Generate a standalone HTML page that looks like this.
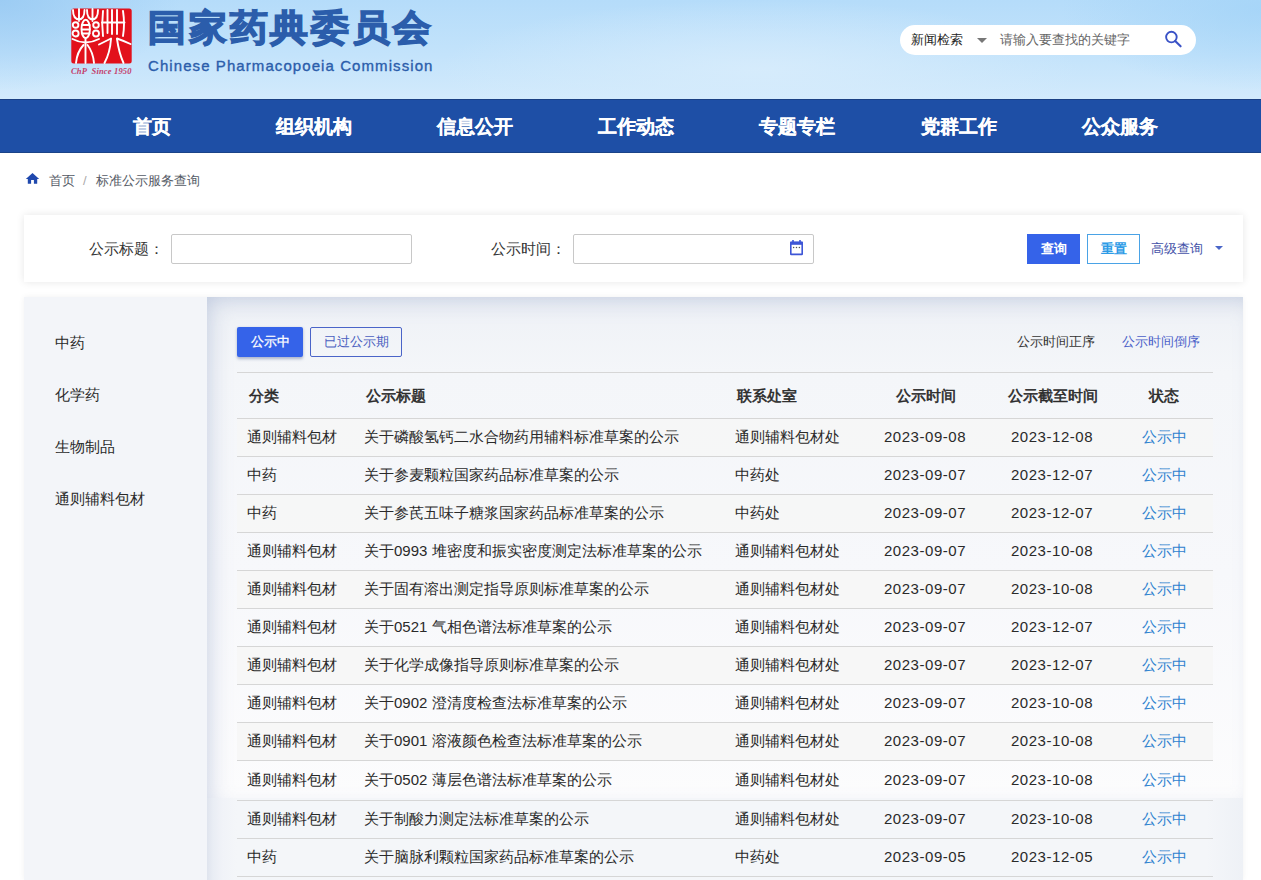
<!DOCTYPE html>
<html><head><meta charset="utf-8">
<style>
*{margin:0;padding:0;box-sizing:border-box}
html,body{width:1261px;height:880px;overflow:hidden;background:#fff;font-family:"Liberation Sans",sans-serif;color:#333}
#hdr{position:absolute;left:0;top:0;width:1261px;height:99px;background:radial-gradient(ellipse 180px 90px at 0px 0px,rgba(150,200,242,0.8),rgba(150,200,242,0)),radial-gradient(ellipse 200px 80px at 1261px 10px,rgba(160,210,247,0.7),rgba(160,210,247,0)),radial-gradient(ellipse 320px 70px at 760px 70px,rgba(215,236,252,0.9),rgba(215,236,252,0)),linear-gradient(180deg,#b5dcfa 0%,#c3e3fb 55%,#d2eafc 100%);overflow:hidden}
#nav{position:absolute;left:0;top:99px;width:1261px;height:54px;background:#1e4fa6;border-top:1px solid #1a4084;border-bottom:1px solid #1a4388}
#nav span{position:absolute;top:0px;height:54px;line-height:54px;width:161.3px;text-align:center;color:#fff;font-size:19px;font-weight:bold;-webkit-text-stroke:0.25px #fff}
.title{position:absolute;left:148px;top:8px;font-size:36px;line-height:40px;font-weight:bold;color:#2b5dab;white-space:nowrap;letter-spacing:2.85px;-webkit-text-stroke:1.5px #2b5dab;transform:scaleX(1.05);transform-origin:0 0}
.en{position:absolute;left:148px;top:57px;font-size:15px;line-height:17px;color:#2b5dab;white-space:nowrap;letter-spacing:1.08px;-webkit-text-stroke:0.35px #2b5dab}
.seal{position:absolute;left:71px;top:8px}
.since{position:absolute;left:71px;top:66px;font-family:"Liberation Serif",serif;font-style:italic;font-weight:bold;font-size:8.5px;line-height:10px;color:#c4406c;white-space:nowrap;letter-spacing:0.15px}
#search{position:absolute;left:900px;top:25px;width:296px;height:30px;border-radius:15px;background:#fff}
.s1{position:absolute;left:911px;top:32px;font-size:13px;line-height:16px;color:#222;white-space:nowrap}
.s2{position:absolute;left:1000px;top:32px;font-size:13px;line-height:16px;color:#666;white-space:nowrap}
.tri{position:absolute;width:0;height:0;border-left:5px solid transparent;border-right:5px solid transparent;border-top:5px solid #777}
.crumb{position:absolute;top:173px;font-size:13px;color:#555b66;white-space:nowrap;line-height:16px}
#qpanel{position:absolute;left:24px;top:215px;width:1219px;height:67px;background:#fff;box-shadow:0 0 8px rgba(0,0,0,0.10)}
.lbl{position:absolute;font-size:14px;color:#333;white-space:nowrap;line-height:18px}
.inp{position:absolute;height:30px;border:1px solid #c8c8c8;border-radius:2px;background:#fff}
.btn{position:absolute;height:30px;font-size:13px;text-align:center;white-space:nowrap}
#main{position:absolute;left:24px;top:297px;width:1219px;height:583px;background:#f3f5f9;box-shadow:0 0 6px rgba(0,0,0,0.06)}
#content{position:absolute;left:207px;top:297px;width:1036px;height:501px;background:linear-gradient(180deg,#eef1f6 0%,#f4f6f9 15%,#f7f8fb 55%,#fcfcfd 100%);box-shadow:inset 8px 8px 24px -8px rgba(120,140,185,0.42)}
#content2{position:absolute;left:207px;top:798px;width:1036px;height:82px;background:linear-gradient(90deg,#dfe4ee 0px,#e9edf4 6px,#f1f3f8 16px,#f4f6f9 30px,#f4f6f9 1000px,#eef1f6 1036px)}
.side{position:absolute;left:55px;font-size:15px;color:#2a2a2a;white-space:nowrap;line-height:20px}
.th{position:absolute;top:386px;font-size:14.8px;line-height:20px;font-weight:normal;-webkit-text-stroke:0.55px #2a2a2a;color:#2a2a2a;white-space:nowrap}
.hl{position:absolute;left:237px;width:976px;height:1px;background:#d6d6d6}
.row{position:absolute;left:237px;width:976px}
.row.stripe{background:rgba(246,246,246,0.9)}
.row span{position:absolute;top:0;font-size:15px;color:#2a2a2a;white-space:nowrap}
.num{letter-spacing:0.55px}
.c1{left:646px;width:84px;text-align:center}
.c2{left:773px;width:84px;text-align:center}
.st{left:897px;width:60px;text-align:center;color:#2f82cf !important}
</style></head><body>
<div id="hdr"></div>
<svg class="seal" width="61" height="56" viewBox="0 0 61 56">
<rect x="0.3" y="0.5" width="60.4" height="55" rx="2.5" fill="#e2111b"/>
<g fill="none" stroke="#fff" stroke-width="1.9" stroke-linecap="round">
<path d="M2 2 Q2 11 8 11.5 Q13.5 11 13.5 2 M8 1 V13"/>
<path d="M16 2 Q16 11 21.5 11.5 Q27 11 27 2 M21.5 1 V13"/>
<ellipse cx="14.7" cy="21" rx="4.2" ry="9.2"/>
<path d="M10.8 17 H18.6 M10.8 21.5 H18.6 M10.8 25.5 H18.6"/>
<circle cx="4.6" cy="17" r="2.8"/><circle cx="4.6" cy="25.5" r="3"/>
<circle cx="25" cy="17" r="2.8"/><circle cx="25" cy="25.5" r="3"/>
<path d="M1.5 31 Q14.5 38 28 31"/>
<path d="M14.5 30 V55"/>
<path d="M12.5 37 Q6 44 5 55 M16.5 37 Q22 44 23 55"/>
<path d="M32 3 Q30.5 16 32 28 M36.5 2 V25 M41 2 V26 M46 2 V26 M52 3 Q54 16 52 28"/>
<path d="M31 14.5 H53.5"/>
<path d="M28 36.5 Q35 33 40 30.5 M46 30.5 Q53 33 59.5 36"/>
<path d="M40 31 Q39 45 33.5 55 M46 31 Q48 45 52.5 55"/>
</g>
</svg>
<div class="since">ChP&nbsp; Since 1950</div>
<div class="title">国家药典委员会</div>
<div class="en">Chinese Pharmacopoeia Commission</div>
<div id="search"></div>
<div class="s1">新闻检索</div>
<div class="tri" style="left:977px;top:38px"></div>
<div class="s2">请输入要查找的关键字</div>
<svg style="position:absolute;left:1163px;top:30px" width="22" height="20" viewBox="0 0 22 20"><circle cx="8.4" cy="7.1" r="5.3" fill="none" stroke="#3a52c6" stroke-width="1.9"/><path d="M12.2 10.9 L17.6 16.3" stroke="#3a52c6" stroke-width="2.1" stroke-linecap="round"/></svg>
<div id="nav">
<span style="left:71.6px">首页</span><span style="left:232.9px">组织机构</span><span style="left:394.2px">信息公开</span><span style="left:555.5px">工作动态</span><span style="left:716.8px">专题专栏</span><span style="left:878.1px">党群工作</span><span style="left:1039.4px">公众服务</span>
</div>
<svg style="position:absolute;left:25px;top:172px" width="15" height="13" viewBox="0 0 15 13"><path d="M7.5 0.9 L14.2 6.9 H12.2 V11.8 H8.9 V7.9 H6.1 V11.8 H2.8 V6.9 H0.8 Z" fill="#1f48ad"/></svg>
<div class="crumb" style="left:49px">首页</div>
<div class="crumb" style="left:83px;color:#aaa">/</div>
<div class="crumb" style="left:96px">标准公示服务查询</div>
<div id="qpanel"></div>
<div class="lbl" style="left:89px;top:240px;font-size:15px">公示标题：</div>
<div class="inp" style="left:171px;top:234px;width:241px"></div>
<div class="lbl" style="left:491px;top:240px;font-size:15px">公示时间：</div>
<div class="inp" style="left:573px;top:234px;width:241px"></div>
<svg style="position:absolute;left:789px;top:239px" width="15" height="17" viewBox="0 0 15 17"><rect x="1.8" y="3.4" width="11.4" height="12" rx="0.4" fill="#fff" stroke="#3d55d6" stroke-width="1.6"/><rect x="1.2" y="2.8" width="12.6" height="3" fill="#3d55d6"/><path d="M4 1 V3.5 M11 1 V3.5" stroke="#3d55d6" stroke-width="1.6"/><circle cx="4.6" cy="8.6" r="0.75" fill="#555"/><circle cx="7.5" cy="8.6" r="0.75" fill="#555"/><circle cx="10.4" cy="8.6" r="0.75" fill="#555"/></svg>
<div class="btn" style="left:1027px;top:234px;width:53px;background:#3563e9;color:#fff;line-height:30px;font-weight:bold">查询</div>
<div class="btn" style="left:1087px;top:234px;width:53px;border:1px solid #4aa3e6;color:#2d9be6;line-height:28px;background:#fff;font-weight:bold">重置</div>
<div class="lbl" style="left:1151px;top:240px;font-size:13px;color:#4452a8">高级查询</div>
<div class="tri" style="left:1215px;top:246px;border-left-width:4px;border-right-width:4px;border-top:4px solid #4a66c8"></div>
<div id="main"></div>
<div id="content"></div>
<div id="content2"></div>
<div class="side" style="top:333px">中药</div>
<div class="side" style="top:385px">化学药</div>
<div class="side" style="top:437px">生物制品</div>
<div class="side" style="top:489px">通则辅料包材</div>
<div class="btn" style="left:237px;top:327px;width:66px;background:#3563e9;color:#fff;line-height:30px;border-radius:2px;-webkit-text-stroke:0.3px #fff;box-shadow:0 1.5px 3px rgba(40,60,120,0.35)">公示中</div>
<div class="btn" style="left:310px;top:327px;width:92px;border:1px solid #4a64c8;color:#4a5fc0;line-height:28px;border-radius:2px;background:transparent">已过公示期</div>
<div class="lbl" style="left:1017px;top:333px;font-size:13px;color:#333">公示时间正序</div>
<div class="lbl" style="left:1122px;top:333px;font-size:13px;color:#4a5fc8">公示时间倒序</div>
<div class="hl" style="top:372px"></div>
<div class="th" style="left:249px">分类</div>
<div class="th" style="left:366px">公示标题</div>
<div class="th" style="left:737px">联系处室</div>
<div class="th" style="left:896px">公示时间</div>
<div class="th" style="left:1008px">公示截至时间</div>
<div class="th" style="left:1149px">状态</div>
<div class="hl" style="top:418px"></div>
<div class="row stripe" style="top:419px;height:38px"><span style="left:10px;line-height:35px">通则辅料包材</span><span style="left:127px;line-height:35px">关于磷酸氢钙二水合物药用辅料标准草案的公示</span><span style="left:498px;line-height:35px">通则辅料包材处</span><span class="num c1" style="line-height:35px">2023-09-08</span><span class="num c2" style="line-height:35px">2023-12-08</span><span class="st" style="line-height:35px">公示中</span></div>
<div class="hl" style="top:456px"></div>
<div class="row" style="top:457px;height:38px"><span style="left:10px;line-height:35px">中药</span><span style="left:127px;line-height:35px">关于参麦颗粒国家药品标准草案的公示</span><span style="left:498px;line-height:35px">中药处</span><span class="num c1" style="line-height:35px">2023-09-07</span><span class="num c2" style="line-height:35px">2023-12-07</span><span class="st" style="line-height:35px">公示中</span></div>
<div class="hl" style="top:494px"></div>
<div class="row stripe" style="top:495px;height:38px"><span style="left:10px;line-height:35px">中药</span><span style="left:127px;line-height:35px">关于参芪五味子糖浆国家药品标准草案的公示</span><span style="left:498px;line-height:35px">中药处</span><span class="num c1" style="line-height:35px">2023-09-07</span><span class="num c2" style="line-height:35px">2023-12-07</span><span class="st" style="line-height:35px">公示中</span></div>
<div class="hl" style="top:532px"></div>
<div class="row" style="top:533px;height:38px"><span style="left:10px;line-height:35px">通则辅料包材</span><span style="left:127px;line-height:35px">关于0993 堆密度和振实密度测定法标准草案的公示</span><span style="left:498px;line-height:35px">通则辅料包材处</span><span class="num c1" style="line-height:35px">2023-09-07</span><span class="num c2" style="line-height:35px">2023-10-08</span><span class="st" style="line-height:35px">公示中</span></div>
<div class="hl" style="top:570px"></div>
<div class="row stripe" style="top:571px;height:38px"><span style="left:10px;line-height:35px">通则辅料包材</span><span style="left:127px;line-height:35px">关于固有溶出测定指导原则标准草案的公示</span><span style="left:498px;line-height:35px">通则辅料包材处</span><span class="num c1" style="line-height:35px">2023-09-07</span><span class="num c2" style="line-height:35px">2023-10-08</span><span class="st" style="line-height:35px">公示中</span></div>
<div class="hl" style="top:608px"></div>
<div class="row" style="top:609px;height:38px"><span style="left:10px;line-height:35px">通则辅料包材</span><span style="left:127px;line-height:35px">关于0521 气相色谱法标准草案的公示</span><span style="left:498px;line-height:35px">通则辅料包材处</span><span class="num c1" style="line-height:35px">2023-09-07</span><span class="num c2" style="line-height:35px">2023-12-07</span><span class="st" style="line-height:35px">公示中</span></div>
<div class="hl" style="top:646px"></div>
<div class="row stripe" style="top:647px;height:38px"><span style="left:10px;line-height:35px">通则辅料包材</span><span style="left:127px;line-height:35px">关于化学成像指导原则标准草案的公示</span><span style="left:498px;line-height:35px">通则辅料包材处</span><span class="num c1" style="line-height:35px">2023-09-07</span><span class="num c2" style="line-height:35px">2023-12-07</span><span class="st" style="line-height:35px">公示中</span></div>
<div class="hl" style="top:684px"></div>
<div class="row" style="top:685px;height:38px"><span style="left:10px;line-height:35px">通则辅料包材</span><span style="left:127px;line-height:35px">关于0902 澄清度检查法标准草案的公示</span><span style="left:498px;line-height:35px">通则辅料包材处</span><span class="num c1" style="line-height:35px">2023-09-07</span><span class="num c2" style="line-height:35px">2023-10-08</span><span class="st" style="line-height:35px">公示中</span></div>
<div class="hl" style="top:722px"></div>
<div class="row stripe" style="top:723px;height:38px"><span style="left:10px;line-height:35px">通则辅料包材</span><span style="left:127px;line-height:35px">关于0901 溶液颜色检查法标准草案的公示</span><span style="left:498px;line-height:35px">通则辅料包材处</span><span class="num c1" style="line-height:35px">2023-09-07</span><span class="num c2" style="line-height:35px">2023-10-08</span><span class="st" style="line-height:35px">公示中</span></div>
<div class="hl" style="top:760px"></div>
<div class="row" style="top:761px;height:40px"><span style="left:10px;line-height:37px">通则辅料包材</span><span style="left:127px;line-height:37px">关于0502 薄层色谱法标准草案的公示</span><span style="left:498px;line-height:37px">通则辅料包材处</span><span class="num c1" style="line-height:37px">2023-09-07</span><span class="num c2" style="line-height:37px">2023-10-08</span><span class="st" style="line-height:37px">公示中</span></div>
<div class="hl" style="top:800px"></div>
<div class="row" style="top:801px;height:38px"><span style="left:10px;line-height:35px">通则辅料包材</span><span style="left:127px;line-height:35px">关于制酸力测定法标准草案的公示</span><span style="left:498px;line-height:35px">通则辅料包材处</span><span class="num c1" style="line-height:35px">2023-09-07</span><span class="num c2" style="line-height:35px">2023-10-08</span><span class="st" style="line-height:35px">公示中</span></div>
<div class="hl" style="top:838px"></div>
<div class="row" style="top:839px;height:38px"><span style="left:10px;line-height:35px">中药</span><span style="left:127px;line-height:35px">关于脑脉利颗粒国家药品标准草案的公示</span><span style="left:498px;line-height:35px">中药处</span><span class="num c1" style="line-height:35px">2023-09-05</span><span class="num c2" style="line-height:35px">2023-12-05</span><span class="st" style="line-height:35px">公示中</span></div>
<div class="hl" style="top:876px"></div>
</body></html>
